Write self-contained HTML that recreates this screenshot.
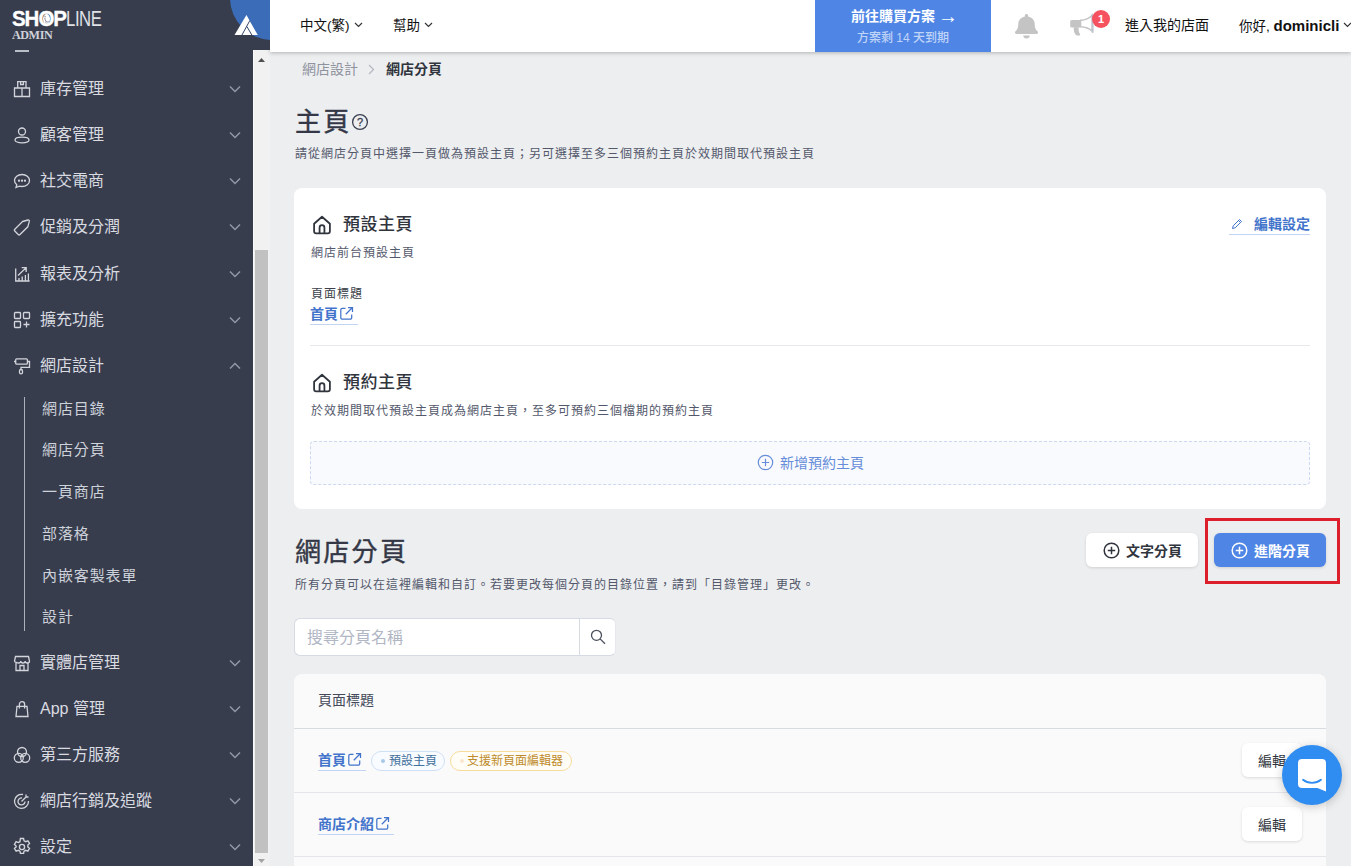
<!DOCTYPE html>
<html lang="zh-Hant">
<head>
<meta charset="utf-8">
<title>網店分頁</title>
<style>
*{box-sizing:border-box;margin:0;padding:0}
html,body{width:1351px;height:866px;overflow:hidden}
body{font-family:"Liberation Sans","Noto Sans CJK TC",sans-serif;background:#edeef0;color:#333;position:relative;font-size:14px}
.abs{position:absolute}
/* sidebar */
#side{position:absolute;left:0;top:0;width:253px;height:866px;background:#383d4d}
#sidetop{position:absolute;left:0;top:0;width:270px;height:50px;background:#383d4d;overflow:hidden}
.mi{margin-top:1px;position:absolute;left:0;width:253px;height:46px;color:#d9dbe1;font-size:16px;line-height:46px}
.mi .t{position:absolute;left:40px;top:0;white-space:nowrap}
.mi svg.ic{position:absolute;left:13px;top:14px;width:18px;height:18px;stroke:#d3d5dc;fill:none;stroke-width:1.3}
.mi svg.ch{position:absolute;left:229px;top:19px;width:12px;height:8px;stroke:#9298a8;fill:none;stroke-width:1.5}
.si{position:absolute;left:42px;color:#cdd1da;letter-spacing:.9px;font-size:15px;line-height:42px;height:42px;white-space:nowrap}
/* scrollbar */
#sb{position:absolute;left:253px;top:50px;width:17px;height:816px;background:#f1f1f1;border-left:1px solid #fafafa}
#sb .th{position:absolute;left:1px;top:200px;width:13px;height:603px;background:#c1c1c1}
/* header */
#hd{position:absolute;left:270px;top:0;width:1081px;height:52px;background:#fff;box-shadow:0 1px 4px rgba(0,0,0,.25)}
#hd .l{position:absolute;top:0;line-height:51px;font-size:13.5px;color:#111;white-space:nowrap}
/* content */
.bc{position:absolute;top:59px;font-size:14px;line-height:20px;white-space:nowrap}
h1{position:absolute;font-weight:400;-webkit-text-stroke:.4px #343846;font-size:26px;line-height:36px;color:#343846;white-space:nowrap;letter-spacing:2.300px}
.desc{position:absolute;font-size:12px;line-height:16px;color:#53586b;white-space:nowrap;letter-spacing:1px}
.card{position:absolute;left:294px;width:1032px;background:#fff;border-radius:8px}
.h2{position:absolute;font-size:17px;font-weight:500;color:#30343d;line-height:24px;white-space:nowrap;letter-spacing:.5px}
.lnk{position:absolute;color:#4374cb;font-weight:700;font-size:14px;line-height:20px;white-space:nowrap;border-bottom:1px solid #c3d4f2}
.btn{position:absolute;height:34px;border-radius:6px;font-size:14px;line-height:36px;white-space:nowrap;box-shadow:0 1px 3px rgba(0,0,0,.12)}
</style>
</head>
<body>

<!-- main content placeholders -->
<div id="content">
<div class="bc" style="left:302px;color:#8e939e">網店設計</div>
<svg class="abs" style="left:368px;top:64px" width="7" height="11" viewBox="0 0 7 11"><path d="M1 1l4.500 4.500L1 10" fill="none" stroke="#b3b7c0" stroke-width="1.200"/></svg>
<div class="bc" style="left:386px;color:#30343d;font-weight:700">網店分頁</div>

<h1 style="left:295px;top:104px">主頁</h1>
<svg class="abs" style="left:351px;top:113px" width="18" height="18" viewBox="0 0 18 18"><circle cx="9" cy="9" r="7.400" fill="none" stroke="#3a3f50" stroke-width="1.300"/><text x="9" y="12.900" text-anchor="middle" font-family="Liberation Sans, sans-serif" font-size="11" font-weight="400" stroke="#3a3f50" stroke-width=".3" fill="#3a3f50">?</text></svg>
<div class="desc" style="left:295px;top:146px">請從網店分頁中選擇一頁做為預設主頁；另可選擇至多三個預約主頁於效期間取代預設主頁</div>

<div class="card" style="top:188px;height:321px"></div>
<svg class="abs" style="left:312px;top:215px" width="20" height="20" viewBox="0 0 19 19"><path d="M2 8.300L9.500 1.700l7.500 6.600V15.500a2 2 0 0 1-2 2H4a2 2 0 0 1-2-2z M7.200 17.500V12a2.300 2.300 0 0 1 4.600 0v5.500" fill="none" stroke="#30343d" stroke-width="1.700" stroke-linejoin="round"/></svg>
<div class="h2" style="left:343px;top:213px">預設主頁</div>
<div class="desc" style="left:311px;top:245px">網店前台預設主頁</div>
<div class="desc" style="left:311px;top:286px;color:#3a3f4b">頁面標題</div>
<div class="lnk" style="left:310px;top:304px;padding-right:20px">首頁<svg class="abs" style="right:4px;top:2px" width="15" height="15" viewBox="0 0 15 15"><path d="M6.500 2.300H3.300a1.500 1.500 0 0 0-1.500 1.500v7.900a1.500 1.500 0 0 0 1.500 1.500h7.900a1.500 1.500 0 0 0 1.500-1.500V8.500 M6.800 8.200l6.400-6.400 M9 1.500h4.500v4.500" fill="none" stroke="#4374cb" stroke-width="1.250"/></svg></div>
<div class="lnk" style="left:1229px;top:214px;padding-left:25px;width:81px;border-bottom-color:#c3d4f2">編輯設定<svg class="abs" style="left:2px;top:4px" width="12" height="12" viewBox="0 0 12 12"><path d="M1.500 10.500l.7-2.700L8.500 1.500l2 2-6.300 6.300z M7.500 2.500l2 2" fill="none" stroke="#4374cb" stroke-width="1"/></svg></div>
<div class="abs" style="left:310px;top:345px;width:1000px;height:1px;background:#e6e8ec"></div>

<svg class="abs" style="left:312px;top:373px" width="20" height="20" viewBox="0 0 19 19"><path d="M2 8.300L9.500 1.700l7.500 6.600V15.500a2 2 0 0 1-2 2H4a2 2 0 0 1-2-2z M7.200 17.500V12a2.300 2.300 0 0 1 4.600 0v5.500" fill="none" stroke="#30343d" stroke-width="1.700" stroke-linejoin="round"/></svg>
<div class="h2" style="left:343px;top:371px">預約主頁</div>
<div class="desc" style="left:311px;top:403px">於效期間取代預設主頁成為網店主頁，至多可預約三個檔期的預約主頁</div>
<div class="abs" style="left:310px;top:441px;width:1000px;height:44px;background:#f9fafe;border:1px dashed #ccd8f0;border-radius:4px"></div>
<div class="abs" style="left:757px;top:453px;color:#658dd9;font-size:14px;line-height:20px;white-space:nowrap;padding-left:23px"><svg class="abs" style="left:0;top:1px" width="17" height="17" viewBox="0 0 17 17"><circle cx="8.500" cy="8.500" r="7.200" fill="none" stroke="#658dd9" stroke-width="1.200"/><path d="M8.500 4.800v7.400M4.800 8.500h7.400" stroke="#658dd9" stroke-width="1.200"/></svg>新增預約主頁</div>
<h1 style="left:295px;top:534px">網店分頁</h1>
<div class="desc" style="left:295px;top:577px">所有分頁可以在這裡編輯和自訂。若要更改每個分頁的目錄位置，請到「目錄管理」更改。</div>
<div class="btn" style="left:1086px;top:533px;width:112px;background:#fff;color:#30343d;font-weight:700;padding-left:40px"><svg class="abs" style="left:17px;top:9px" width="17" height="17" viewBox="0 0 17 17"><circle cx="8.500" cy="8.500" r="7.300" fill="none" stroke="#30343d" stroke-width="1.500"/><path d="M8.500 4.800v7.400M4.800 8.500h7.400" stroke="#30343d" stroke-width="1.500"/></svg>文字分頁</div>
<div class="btn" style="left:1214px;top:533px;width:112px;background:#4f86e5;color:#fff;font-weight:700;padding-left:40px"><svg class="abs" style="left:17px;top:9px" width="17" height="17" viewBox="0 0 17 17"><circle cx="8.500" cy="8.500" r="7.300" fill="none" stroke="#fff" stroke-width="1.500"/><path d="M8.500 4.800v7.400M4.800 8.500h7.400" stroke="#fff" stroke-width="1.500"/></svg>進階分頁</div>
<div class="abs" style="left:1205px;top:518px;width:135px;height:66px;border:3px solid #dc1f2b"></div>

<div class="abs" style="left:294px;top:618px;width:322px;height:38px;background:#fff;border:1px solid #d6dae2;border-right-color:#e6e8ed;border-radius:6px"></div>
<div class="abs" style="left:579px;top:619px;width:1px;height:36px;background:#d6dae2"></div>
<div class="abs" style="left:307px;top:628px;font-size:16px;line-height:20px;color:#b1b6c4;white-space:nowrap">搜尋分頁名稱</div>
<svg class="abs" style="left:589px;top:628px" width="17" height="17" viewBox="0 0 17 17"><circle cx="7.500" cy="7.300" r="5" fill="none" stroke="#4a4f5c" stroke-width="1.300"/><path d="M11.100 10.900L16 15.700" stroke="#4a4f5c" stroke-width="1.300"/></svg>

<div class="abs" style="left:294px;top:674px;width:1032px;height:200px;background:#fafafb;border-radius:8px 8px 0 0"></div>
<div class="abs" style="left:318px;top:690px;font-size:14px;line-height:20px;color:#454a5a;white-space:nowrap">頁面標題</div>
<div class="abs" style="left:294px;top:728px;width:1032px;height:1px;background:#d8dbe1"></div>
<div class="abs" style="left:294px;top:792px;width:1032px;height:1px;background:#e4e6ea"></div>
<div class="abs" style="left:294px;top:856px;width:1032px;height:1px;background:#e4e6ea"></div>

<div class="lnk" style="left:318px;top:750px;padding-right:20px">首頁<svg class="abs" style="right:4px;top:2px" width="15" height="15" viewBox="0 0 15 15"><path d="M6.500 2.300H3.300a1.500 1.500 0 0 0-1.500 1.500v7.900a1.500 1.500 0 0 0 1.500 1.500h7.900a1.500 1.500 0 0 0 1.500-1.500V8.500 M6.800 8.200l6.400-6.400 M9 1.500h4.500v4.500" fill="none" stroke="#4374cb" stroke-width="1.250"/></svg></div>
<div class="abs" style="left:371px;top:751px;width:74px;height:20px;border:1px solid #cfe1f5;border-radius:10px;background:#f8fbff;font-size:12px;line-height:19px;color:#3f6f9c;white-space:nowrap;padding-left:17px"><i style="position:absolute;left:9px;top:7px;width:4px;height:4px;border-radius:50%;background:#a9c8e8"></i>預設主頁</div>
<div class="abs" style="left:450px;top:751px;width:122px;height:20px;border:1px solid #f7dc9c;border-radius:10px;background:#fffdf5;font-size:12px;line-height:19px;color:#be8a2b;white-space:nowrap;padding-left:16px"><i style="position:absolute;left:9px;top:7px;width:4px;height:4px;border-radius:50%;background:#fbe6d0"></i>支援新頁面編輯器</div>
<div class="btn" style="left:1242px;top:743px;width:60px;background:#fff;color:#30343d;text-align:center">編輯</div>

<div class="lnk" style="left:318px;top:814px;padding-right:20px">商店介紹<svg class="abs" style="right:4px;top:2px" width="15" height="15" viewBox="0 0 15 15"><path d="M6.500 2.300H3.300a1.500 1.500 0 0 0-1.500 1.500v7.900a1.500 1.500 0 0 0 1.500 1.500h7.900a1.500 1.500 0 0 0 1.500-1.500V8.500 M6.800 8.200l6.400-6.400 M9 1.500h4.500v4.500" fill="none" stroke="#4374cb" stroke-width="1.250"/></svg></div>
<div class="btn" style="left:1242px;top:807px;width:60px;background:#fff;color:#30343d;text-align:center">編輯</div>

<div class="abs" style="left:1282px;top:745px;width:60px;height:60px;border-radius:50%;background:#2f8cf0;box-shadow:0 2px 10px rgba(0,0,0,.2)"></div>
<svg class="abs" style="left:1297px;top:759px" width="30" height="33" viewBox="0 0 30 33"><path d="M5 0h20a4 4 0 0 1 4 4v28.500L20.500 29H5a4 4 0 0 1-4-4V4a4 4 0 0 1 4-4z" fill="#fff"/><path d="M6 20.800c5 4 13 4 18 0" fill="none" stroke="#2f8cf0" stroke-width="1.800" stroke-linecap="round"/></svg>

</div>

<div id="side">
<div class="mi" style="top:65px"><svg class="ic" viewBox="0 0 18 18"><path d="M4.700 1.700h8.300v6.300H4.700z M1.500 8h15v8.500h-15z M9 8v8.500 M7.600 1.700v2.800h2.800V1.700"/></svg><span class="t">庫存管理</span><svg class="ch" viewBox="0 0 12 8"><path d="M1 1.5 L6 6.5 L11 1.5"/></svg></div>
<div class="mi" style="top:111px"><svg class="ic" viewBox="0 0 18 18"><circle cx="9" cy="5.5" r="3.5"/><ellipse cx="9" cy="14" rx="7" ry="2.8"/></svg><span class="t">顧客管理</span><svg class="ch" viewBox="0 0 12 8"><path d="M1 1.5 L6 6.5 L11 1.5"/></svg></div>
<div class="mi" style="top:157px"><svg class="ic" viewBox="0 0 18 18"><path d="M9 2.5c4.2 0 7.5 2.6 7.5 6s-3.300 6-7.500 6c-.9 0-1.800-.1-2.600-.35L3 15.500l.8-2.800C2.400 11.600 1.500 10.100 1.500 8.500c0-3.400 3.300-6 7.500-6z"/><circle cx="6" cy="8.700" r=".5" fill="#d3d5dc"/><circle cx="9" cy="8.700" r=".5" fill="#d3d5dc"/><circle cx="12" cy="8.700" r=".5" fill="#d3d5dc"/></svg><span class="t">社交電商</span><svg class="ch" viewBox="0 0 12 8"><path d="M1 1.5 L6 6.5 L11 1.5"/></svg></div>
<div class="mi" style="top:203px"><svg class="ic" viewBox="0 0 18 18"><path d="M9.500 3.500l5.500-1.500c.8-.2 1.500.5 1.300 1.300L14.800 8.800 7 16.500c-.5.500-1.300.5-1.800 0L1.800 13c-.5-.5-.5-1.300 0-1.800z"/></svg><span class="t">促銷及分潤</span><svg class="ch" viewBox="0 0 12 8"><path d="M1 1.5 L6 6.5 L11 1.5"/></svg></div>
<div class="mi" style="top:250px"><svg class="ic" viewBox="0 0 18 18"><path d="M2.700 3.500V16h13.900 M6 16v-3 M9.200 16v-4.500 M12.400 16v-6 M15.400 16V8.500 M5 10.500l8.200-7.900 M8.700 2.600h4.500v4.500"/></svg><span class="t">報表及分析</span><svg class="ch" viewBox="0 0 12 8"><path d="M1 1.5 L6 6.5 L11 1.5"/></svg></div>
<div class="mi" style="top:296px"><svg class="ic" viewBox="0 0 18 18"><rect x="1.500" y="1.500" width="6" height="6" rx=".8"/><rect x="10.500" y="1.500" width="6" height="6" rx=".8"/><rect x="1.500" y="10.500" width="6" height="6" rx=".8"/><path d="M13.500 10.500v6 M10.500 13.500h6"/></svg><span class="t">擴充功能</span><svg class="ch" viewBox="0 0 12 8"><path d="M1 1.5 L6 6.5 L11 1.5"/></svg></div>
<div class="mi" style="top:342px"><svg class="ic" viewBox="0 0 18 18"><rect x="2.700" y="1.800" width="11.700" height="5.400" rx="1"/><path d="M14.400 4.500h2.100v5.900H8v2.100 M2.700 4.500H1"/><rect x="6.500" y="12.500" width="3" height="4.300" rx="1.400"/></svg><span class="t">網店設計</span><svg class="ch" viewBox="0 0 12 8"><path d="M1 6.5 L6 1.5 L11 6.5"/></svg></div>
<div class="mi" style="top:639px"><svg class="ic" viewBox="0 0 18 18"><path d="M2.500 2.500h13l1 4.500c0 1.200-1 2-2.200 2s-2.100-.8-2.100-2c0 1.200-1 2-2.200 2s-2.200-.8-2.200-2c0 1.200-1 2-2.100 2S1.500 8.200 1.500 7z M3 9v7.500h12V9 M7 16.500v-5h4v5"/></svg><span class="t">實體店管理</span><svg class="ch" viewBox="0 0 12 8"><path d="M1 1.5 L6 6.5 L11 1.5"/></svg></div>
<div class="mi" style="top:685px"><svg class="ic" viewBox="0 0 18 18"><path d="M4 6.300h10l1 10.200H3z M6.400 8.500V4.300a2.600 2.600 0 0 1 5.200 0v4.200"/></svg><span class="t">App 管理</span><svg class="ch" viewBox="0 0 12 8"><path d="M1 1.5 L6 6.5 L11 1.5"/></svg></div>
<div class="mi" style="top:731px"><svg class="ic" viewBox="0 0 18 18"><circle cx="9" cy="6" r="4.500"/><circle cx="5.800" cy="11.800" r="4.500"/><circle cx="12.200" cy="11.800" r="4.500"/></svg><span class="t">第三方服務</span><svg class="ch" viewBox="0 0 12 8"><path d="M1 1.5 L6 6.5 L11 1.5"/></svg></div>
<div class="mi" style="top:777px"><svg class="ic" viewBox="0 0 18 18"><path d="M15.500 9a7 7 0 1 1-5.500-6.500 M12 9.500a3.500 3.500 0 1 1-3-3.500 M8.500 9.500L13 5 M13 5V2.500 M13 5h2.500"/></svg><span class="t">網店行銷及追蹤</span><svg class="ch" viewBox="0 0 12 8"><path d="M1 1.5 L6 6.5 L11 1.5"/></svg></div>
<div class="mi" style="top:823px"><svg class="ic" viewBox="0 0 18 18" style="transform:scale(1.130);stroke-width:1.200"><circle cx="9" cy="9" r="2.300"/><path d="M7.600 1.500h2.800l.4 2 1.500.8 1.900-.8 1.500 2.400-1.500 1.400v1.600l1.500 1.400-1.500 2.400-1.900-.8-1.500.8-.4 2H7.600l-.4-2-1.500-.8-1.900.8-1.500-2.400 1.500-1.400V8.100L2.300 6.700l1.500-2.400 1.900.8 1.500-.8z"/></svg><span class="t">設定</span><svg class="ch" viewBox="0 0 12 8"><path d="M1 1.5 L6 6.5 L11 1.5"/></svg></div>
<div class="abs" style="left:24px;top:397px;width:1px;height:234px;background:#aeb2bd"></div>
<div class="si" style="top:388px">網店目錄</div>
<div class="si" style="top:429px">網店分頁</div>
<div class="si" style="top:471px">一頁商店</div>
<div class="si" style="top:513px">部落格</div>
<div class="si" style="top:555px">內嵌客製表單</div>
<div class="si" style="top:596px">設計</div>
<div class="abs" style="left:15px;top:50px;width:14px;height:2px;background:#c9ccd4;opacity:.9"></div>
</div>
<div id="sb"><div class="th"></div>
<svg class="abs" style="left:4px;top:8px" width="7" height="4" viewBox="0 0 7 4"><path d="M0 4L3.500 0L7 4z" fill="#505050"/></svg>
<svg class="abs" style="left:4px;top:809px" width="7" height="4" viewBox="0 0 7 4"><path d="M0 0L3.500 4L7 0z" fill="#a3a3a3"/></svg>
</div>
<div id="hd">
<div class="l" style="left:30px">中文(繁)</div>
<svg class="abs" style="left:84px;top:22px" width="9" height="6" viewBox="0 0 9 6"><path d="M1 1L4.500 4.500L8 1" fill="none" stroke="#333" stroke-width="1.200"/></svg>
<div class="l" style="left:123px">幫助</div>
<svg class="abs" style="left:154px;top:22px" width="9" height="6" viewBox="0 0 9 6"><path d="M1 1L4.500 4.500L8 1" fill="none" stroke="#333" stroke-width="1.200"/></svg>
<div class="abs" style="left:545px;top:0;width:176px;height:52px;background:#4f86e5;text-align:center;color:#fff">
<div style="position:absolute;left:0;right:0;top:6px;font-size:14px;font-weight:700;line-height:20px;white-space:nowrap;padding-left:3px">前往購買方案 <span style="font-size:20px;line-height:0;font-weight:400;position:relative;top:1.5px;margin-left:-1px">→</span></div>
<div style="position:absolute;left:0;right:0;top:30px;font-size:12px;line-height:16px;color:#c0d4f8;font-weight:500;white-space:nowrap">方案剩 14 天到期</div>
</div>
<svg class="abs" style="left:745px;top:14px" width="23" height="24.500" viewBox="0 0 448 512" preserveAspectRatio="none"><path d="M224 512c35.320 0 63.970-28.650 63.970-64H160.030c0 35.350 28.650 64 63.970 64zm215.390-149.710c-19.320-20.760-55.470-51.990-55.470-154.290 0-77.700-54.480-139.900-127.940-155.160V32c0-17.670-14.320-32-31.980-32s-31.980 14.330-31.980 32v20.840C118.560 68.100 64.080 130.300 64.080 208c0 102.300-36.150 133.530-55.470 154.290-6 6.450-8.660 14.160-8.610 21.710.11 16.400 12.980 32 32.100 32h383.800c19.120 0 32-15.600 32.100-32 .05-7.550-2.610-15.270-8.610-21.710z" fill="#c4c4c4"/></svg>
<svg class="abs" style="left:798px;top:12px" width="28" height="26" viewBox="0 0 28 26"><path d="M12.500 8.400C17.500 8 21.500 6 24.300 3.200V19.200C21.500 16.500 17.500 15 12.500 14.800z" fill="#fff" stroke="#c4c4c4" stroke-width="1.600" stroke-linejoin="round"/><path d="M24.600 2.400v17.600" stroke="#bfc4cf" stroke-width="2" stroke-linecap="round"/><path d="M3.800 7.900h8.700v7.600H3.800a1.600 1.600 0 0 1-1.600-1.600V9.500a1.600 1.600 0 0 1 1.600-1.600z" fill="#c4c4c4"/><path d="M5.800 15.200c-.3 2.800.3 5.300 1.700 7.300.5.800 1.200 1.100 2.100 1.100h1.500c1 0 1.400-.9.900-1.600-1.200-1.600-1.700-3.900-1.300-6.800z" fill="#c4c4c4"/></svg>
<div class="abs" style="left:822px;top:10px;width:18px;height:18px;border-radius:50%;background:#f5515f;color:#fff;font-size:11px;font-weight:700;line-height:18px;text-align:center">1</div>
<div class="l" style="left:855px;font-size:14px">進入我的店面</div>
<div class="l" style="left:969px">你好, <b style="font-size:15px">dominicli</b></div>
<svg class="abs" style="left:1073px;top:22px" width="9" height="6" viewBox="0 0 9 6"><path d="M1 1L4.500 4.500L8 1" fill="none" stroke="#333" stroke-width="1.200"/></svg>
</div>
<div id="sidetop">
<div class="abs" style="left:12px;top:7px;color:#fff;font-size:20.5px;line-height:24px;font-weight:700;letter-spacing:-1.05px;-webkit-text-stroke:.3px #fff;white-space:nowrap;transform:scaleY(1.07);transform-origin:0 80%">SHOP<span style="display:inline-block;font-weight:400;color:#dfe1e6;letter-spacing:-.5px;-webkit-text-stroke:0;margin-left:.5px;transform:scaleX(.815);transform-origin:0 50%">LINE</span></div>
<div class="abs" style="left:42.500px;top:13.500px;width:7px;height:10.500px;border-radius:50%;background:#fff"></div>
<svg class="abs" style="left:41px;top:12px" width="12" height="14" viewBox="0 0 12 14"><path d="M3.600 4.200l1 .6M3.800 6.200c.3 1.200.5 2.200 1.200 3.200M5.500 9.800c.8.400 1.800.3 2.500-.2M4.600 10.300l.5.500" stroke="#59607a" stroke-width=".7" fill="none" stroke-linecap="round"/></svg>
<div class="abs" style="left:12px;top:27px;color:#cfd2d9;font-family:'Liberation Serif',serif;font-size:13px;font-weight:700;line-height:16px;letter-spacing:-.5px;white-space:nowrap;transform:scaleX(.935);transform-origin:0 50%">ADMIN</div>
<div class="abs" style="left:230px;top:-44px;width:84px;height:84px;border-radius:50%;background:#3a6cb8"></div>
<svg class="abs" style="left:233px;top:14px" width="26" height="22" viewBox="0 0 26 22"><path d="M13.450 1.070L1.500 21.100H24.800z" fill="#fff"/><path d="M16.800 6.600L8.900 21.100M13.800 12.400L18.900 21.100" stroke="#36456d" stroke-width="1" fill="none"/></svg>
</div>

</body>
</html>
